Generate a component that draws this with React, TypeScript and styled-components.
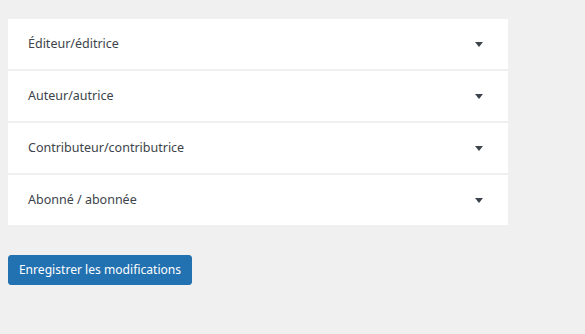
import React from 'react';
import styled, { createGlobalStyle } from 'styled-components';

const GlobalStyle = createGlobalStyle`
  html, body {
    margin: 0;
    padding: 0;
    background: #f0f0f1;
  }
  body {
    font-family: "Noto Sans", "Open Sans", sans-serif;
    font-size: 13px;
    color: #3c434a;
  }
`;

const Page = styled.div`
  padding: 19px 8px 0 8px;
`;

const Panel = styled.div`
  width: 500px;
  display: flex;
  flex-direction: column;
  gap: 2px;
`;

const Row = styled.div`
  height: 50px;
  background: #fff;
  display: flex;
  align-items: center;
  justify-content: space-between;
  padding: 0 25px 0 20px;
  box-sizing: border-box;
  cursor: pointer;
`;

const Label = styled.span`
  font-size: 12.5px;
  line-height: 16px;
  color: #3c434a;
`;

const Caret = styled.span`
  width: 0;
  height: 0;
  border-left: 4px solid transparent;
  border-right: 4px solid transparent;
  border-top: 5px solid #3c434a;
  margin-top: 1px;
`;

const SaveButton = styled.button`
  margin-top: 30px;
  height: 30px;
  width: 184px;
  padding: 0 0 2px 0;
  background: #2271b1;
  border: 1px solid #2271b1;
  border-radius: 3px;
  color: #fff;
  font-family: "Noto Sans", "Open Sans", sans-serif;
  font-size: 12.1px;
  cursor: pointer;
`;

const roles = [
  'Éditeur/éditrice',
  'Auteur/autrice',
  'Contributeur/contributrice',
  'Abonné / abonnée',
];

const App: React.FC = () => {
  return (
    <>
      <GlobalStyle />
      <Page>
        <Panel>
          {roles.map((r) => (
            <Row key={r}>
              <Label>{r}</Label>
              <Caret />
            </Row>
          ))}
        </Panel>
        <SaveButton>Enregistrer les modifications</SaveButton>
      </Page>
    </>
  );
};

export default App;
